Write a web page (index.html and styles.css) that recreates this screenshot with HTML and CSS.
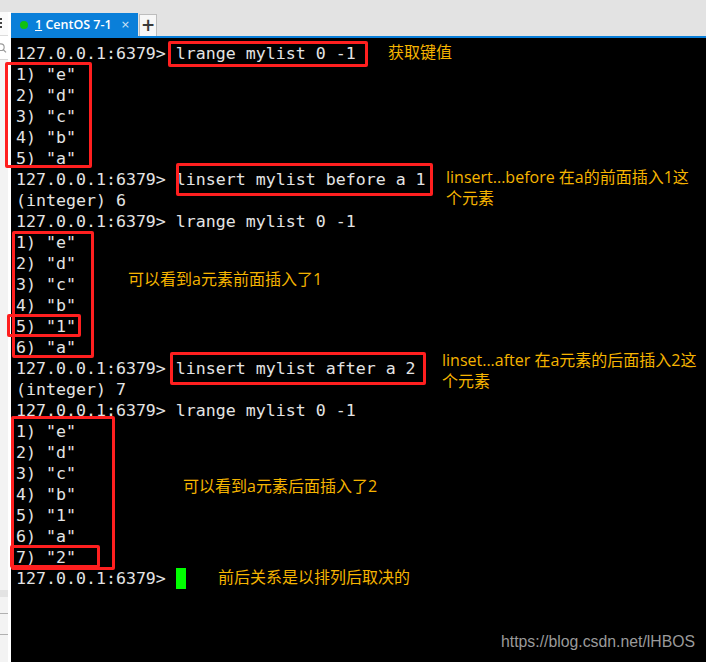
FILE: index.html
```html
<!DOCTYPE html>
<html lang="zh-CN">
<head>
<meta charset="utf-8">
<title>CentOS 7-1 redis-cli</title>
<link rel="stylesheet" href="styles.css">
</head>
<body>
<div class="screen">
  <aside class="side">
    <div class="side-top"></div>
    <div class="side-tool"><span class="tool-dots"></span></div>
    <div class="side-search">
      <svg class="mag" width="10" height="14" viewBox="0 0 10 14"><circle cx="1" cy="6" r="4.2" fill="none" stroke="#9a9a9a" stroke-width="1.4"/><line x1="4" y1="9" x2="7.5" y2="12.5" stroke="#9a9a9a" stroke-width="1.6"/></svg>
    </div>
    <div class="side-rest">
      <div class="side-foot">
        <div class="side-row"></div>
        <div class="side-row"></div>
      </div>
    </div>
  </aside>
  <div class="pane">
    <div class="topbar">
      <div class="tab">
        <span class="dot"></span>
        <span class="tab-title"><span class="ul">1</span> CentOS 7-1</span>
        <span class="close">×</span>
      </div>
      <div class="add">+</div>
    </div>
    <div class="accent"></div>
    <div class="term">
      <div class="ln">127.0.0.1:6379&gt; lrange mylist 0 -1</div>
      <div class="ln">1) "e"</div>
      <div class="ln">2) "d"</div>
      <div class="ln">3) "c"</div>
      <div class="ln">4) "b"</div>
      <div class="ln">5) "a"</div>
      <div class="ln">127.0.0.1:6379&gt; linsert mylist before a 1</div>
      <div class="ln">(integer) 6</div>
      <div class="ln">127.0.0.1:6379&gt; lrange mylist 0 -1</div>
      <div class="ln">1) "e"</div>
      <div class="ln">2) "d"</div>
      <div class="ln">3) "c"</div>
      <div class="ln">4) "b"</div>
      <div class="ln">5) "1"</div>
      <div class="ln">6) "a"</div>
      <div class="ln">127.0.0.1:6379&gt; linsert mylist after a 2</div>
      <div class="ln">(integer) 7</div>
      <div class="ln">127.0.0.1:6379&gt; lrange mylist 0 -1</div>
      <div class="ln">1) "e"</div>
      <div class="ln">2) "d"</div>
      <div class="ln">3) "c"</div>
      <div class="ln">4) "b"</div>
      <div class="ln">5) "1"</div>
      <div class="ln">6) "a"</div>
      <div class="ln">7) "2"</div>
      <div class="ln">127.0.0.1:6379&gt; <span class="cursor"></span></div>
    </div>
  </div>

  <div class="overlay">
    <div class="box b1"></div>
    <div class="box b2"></div>
    <div class="box b3"></div>
    <div class="box b4"></div>
    <div class="box b5"></div>
    <div class="box b6"></div>
    <div class="box b7"></div>
    <div class="box b8"></div>

    <div class="note n1">获取键值</div>
    <div class="note n2">linsert...before 在a的前面插入1这<br>个元素</div>
    <div class="note n3">可以看到a元素前面插入了1</div>
    <div class="note n4">linset...after 在a元素的后面插入2这<br>个元素</div>
    <div class="note n5">可以看到a元素后面插入了2</div>
    <div class="note n6">前后关系是以排列后取决的</div>

    <div class="watermark">https://blog.csdn.net/lHBOS</div>
  </div>
</div>
</body>
</html>
```

FILE: styles.css
```css
* { box-sizing: border-box; }
html, body { margin: 0; padding: 0; background: #000; }

.screen {
  position: relative;
  width: 706px;
  height: 662px;
  overflow: hidden;
  display: flex;
  background: #000;
}

/* left sidebar strip */
.side {
  width: 11px;
  flex: none;
  display: flex;
  flex-direction: column;
  background: #fff;
}
.side-top { height: 12px; background: #e3e3e3; width: 11px; }
.side-tool {
  height: 24px;
  width: 8px;
  background: #fbfbfb;
  border-bottom: 1px solid #dcdcdc;
  position: relative;
}
.tool-dots {
  position: absolute;
  left: 0;
  top: 6px;
  width: 2px;
  height: 2px;
  background: #444;
  box-shadow: 0 4px 0 #444, 0 8px 0 #444;
}
.side-search {
  height: 24px;
  width: 8px;
  background: #fff;
  border-bottom: 1px solid #d8d8d8;
  overflow: hidden;
  display: flex;
  align-items: center;
}
.mag { display: block; }
.side-rest {
  flex: 1;
  width: 8px;
  background: #f3f3f3;
  display: flex;
  flex-direction: column;
  justify-content: flex-end;
}
.side-foot {
  height: 72px;
  border-top: 7px solid #e3e3e3;
  display: flex;
  flex-direction: column;
  padding-top: 16px;
  gap: 20px;
}
.side-row { height: 1px; background: #b0b0b0; }

/* right pane */
.pane {
  flex: 1;
  display: flex;
  flex-direction: column;
  min-width: 0;
}
.topbar {
  height: 36px;
  background: #e3e3e3;
  display: flex;
  align-items: flex-end;
  gap: 1px;
}
.tab {
  width: 127px;
  height: 23px;
  background: #0a7fd9;
  display: flex;
  align-items: center;
  padding-left: 9px;
  color: #fff;
  font-family: "Open Sans", "Noto Sans", sans-serif;
  font-size: 12.5px;
  font-weight: 600;
}
.dot {
  width: 8px;
  height: 8px;
  border-radius: 50%;
  background: #10c010;
  margin-right: 7px;
}
.tab-title { white-space: nowrap; }
.ul { text-decoration: underline; }
.close {
  margin-left: auto;
  margin-right: 8px;
  font-family: "DejaVu Sans", sans-serif;
  font-weight: 400;
  font-size: 11px;
  color: #cfe3f5;
}
.add {
  width: 18px;
  height: 22px;
  background: #f7f7f7;
  border: 1px solid #bdbdbd;
  border-bottom: none;
  display: flex;
  align-items: center;
  justify-content: center;
  font-family: "DejaVu Sans", sans-serif;
  font-weight: 700;
  font-size: 17px;
  color: #3a3a3a;
  line-height: 1;
}
.accent { height: 2px; background: #0a7fd9; }

.term {
  flex: 1;
  display: flex;
  flex-direction: column;
  align-items: flex-start;
  padding: 5px 0 0 5px;
  background: #000;
  color: #e4e4e4;
  font-family: "DejaVu Sans Mono", monospace;
  font-size: 16.6px;
  line-height: 21px;
}
.ln { white-space: pre; height: 21px; }
.cursor {
  display: inline-block;
  width: 10px;
  height: 21px;
  background: #00ff00;
  vertical-align: top;
}

/* annotation overlay */
.overlay {
  position: absolute;
  inset: 0;
  pointer-events: none;
}
.box {
  position: absolute;
  border: 3px solid #ff1f1f;
  border-radius: 2px;
}
.b1 { left: 168px; top: 41px;  width: 200px; height: 26px; }
.b2 { left: 5px;   top: 62px;  width: 87px;  height: 106px; }
.b3 { left: 176px; top: 163px; width: 257px; height: 33px; }
.b4 { left: 12px;  top: 231px; width: 82px;  height: 127px; }
.b5 { left: 7px;   top: 314px; width: 74px;  height: 23px; }
.b6 { left: 170px; top: 352px; width: 256px; height: 33px; }
.b7 { left: 11px;  top: 416px; width: 104px; height: 154px; }
.b8 { left: 10px;  top: 545px; width: 90px;  height: 23px; }

.note {
  position: absolute;
  color: #f5b400;
  font-family: "Open Sans", "Noto Sans CJK SC", sans-serif;
  font-size: 16px;
  line-height: 21px;
  white-space: nowrap;
}
.n1 { left: 388px; top: 42px; }
.n2 { left: 446px; top: 167px; }
.n3 { left: 128px; top: 269px; }
.n4 { left: 442px; top: 350px; }
.n5 { left: 183px; top: 476px; }
.n6 { left: 218px; top: 567px; }

.watermark {
  position: absolute;
  left: 501px;
  top: 632px;
  color: #9a9a9a;
  font-family: "Liberation Sans", Arial, sans-serif;
  font-size: 15.8px;
  line-height: 20px;
  white-space: nowrap;
}
```
